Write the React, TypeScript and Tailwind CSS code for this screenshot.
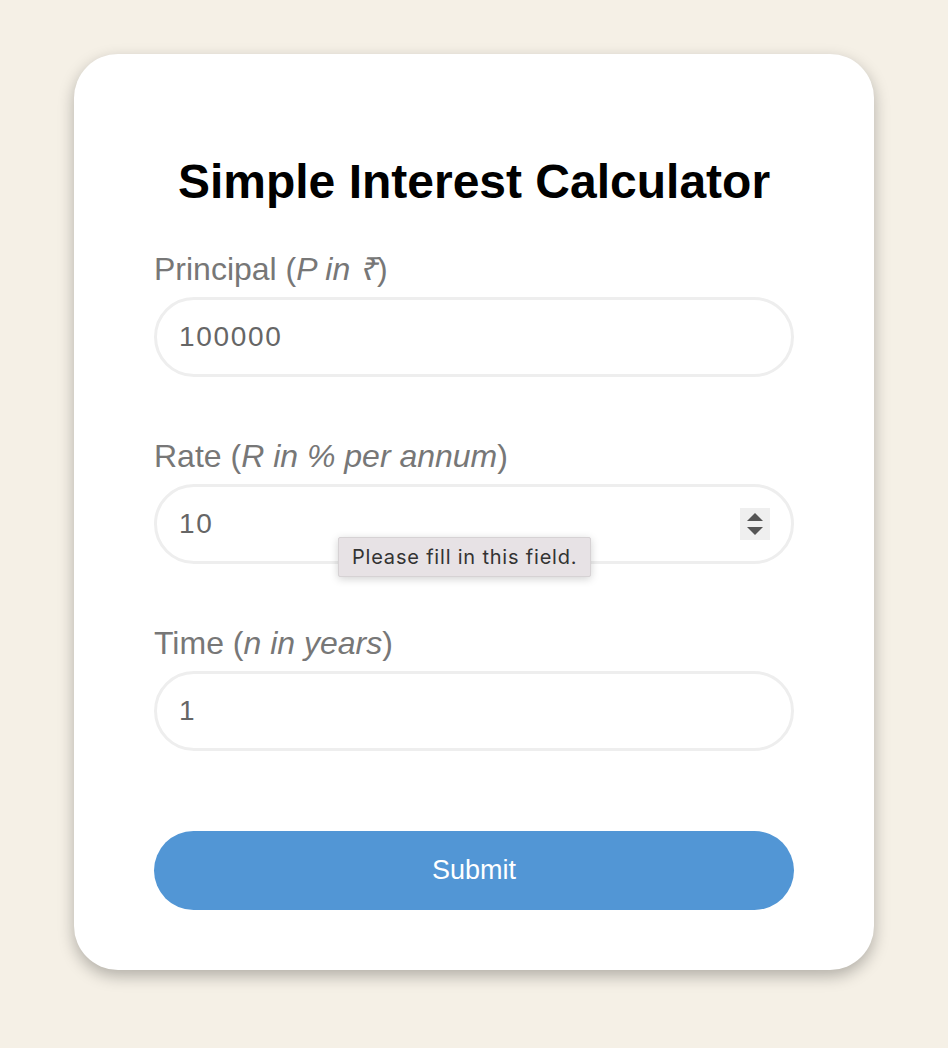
import { useState } from 'react';

function Field({
  label,
  hint,
  value,
  onChange,
  spinner,
  tooltip,
}: {
  label: string;
  hint: string;
  value: string;
  onChange: (v: string) => void;
  spinner?: boolean;
  tooltip?: string;
}) {
  return (
    <div>
      <label className="block text-[32px] leading-[37px] text-[#777] mb-[9px]">
        {label} (<i>{hint}</i>)
      </label>
      <div className="relative">
        <input
          type="text"
          inputMode="numeric"
          value={value}
          onChange={(e) => onChange(e.target.value)}
          className="w-full h-[80px] rounded-full border-[3px] border-[#eeeeee] bg-white pl-[22px] pr-6 text-[28px] tracking-[0.06em] text-[#666] outline-none"
        />
        {spinner && (
          <div className="absolute right-[24px] top-[24px] w-[30px] h-[32px] bg-[#efefef] flex flex-col items-center justify-center gap-[6px]">
            <svg width="16" height="8" viewBox="0 0 16 8">
              <path d="M8 0 L16 8 L0 8 Z" fill="#555" />
            </svg>
            <svg width="16" height="8" viewBox="0 0 16 8">
              <path d="M0 0 L16 0 L8 8 Z" fill="#555" />
            </svg>
          </div>
        )}
        {tooltip && (
          <div className="absolute left-[184px] top-[53px] h-[40px] px-[13px] flex items-center bg-[#e7e2e5] border border-[#d6d2d4] rounded-[2px] shadow-[0_2px_8px_rgba(0,0,0,0.18)] text-[20px] tracking-[0.04em] text-[#333] font-['Inter',sans-serif] whitespace-nowrap">
            {tooltip}
          </div>
        )}
      </div>
    </div>
  );
}

export default function App() {
  const [principal, setPrincipal] = useState('100000');
  const [rate, setRate] = useState('10');
  const [time, setTime] = useState('1');

  return (
    <div className="min-h-screen bg-[#f5f0e6] pt-[54px] font-['Liberation_Sans',Arial,sans-serif]">
      <div className="w-[800px] mx-auto bg-white rounded-[44px] shadow-[0_6px_16px_rgba(0,0,0,0.28)] px-[80px] pt-[100px] pb-[60px]">
        <h1 className="text-center text-[48px] leading-[55px] font-bold text-black mb-[42px]">
          Simple Interest Calculator
        </h1>
        <form
          className="flex flex-col gap-[61px]"
          onSubmit={(e) => e.preventDefault()}
        >
          <Field label="Principal" hint="P in ₹" value={principal} onChange={setPrincipal} />
          <Field
            label="Rate"
            hint="R in % per annum"
            value={rate}
            onChange={setRate}
            spinner
            tooltip="Please fill in this field."
          />
          <Field label="Time" hint="n in years" value={time} onChange={setTime} />
          <button
            type="submit"
            className="mt-[19px] w-full h-[79px] rounded-full bg-[#5296d5] text-white text-[27px]"
          >
            Submit
          </button>
        </form>
      </div>
    </div>
  );
}
